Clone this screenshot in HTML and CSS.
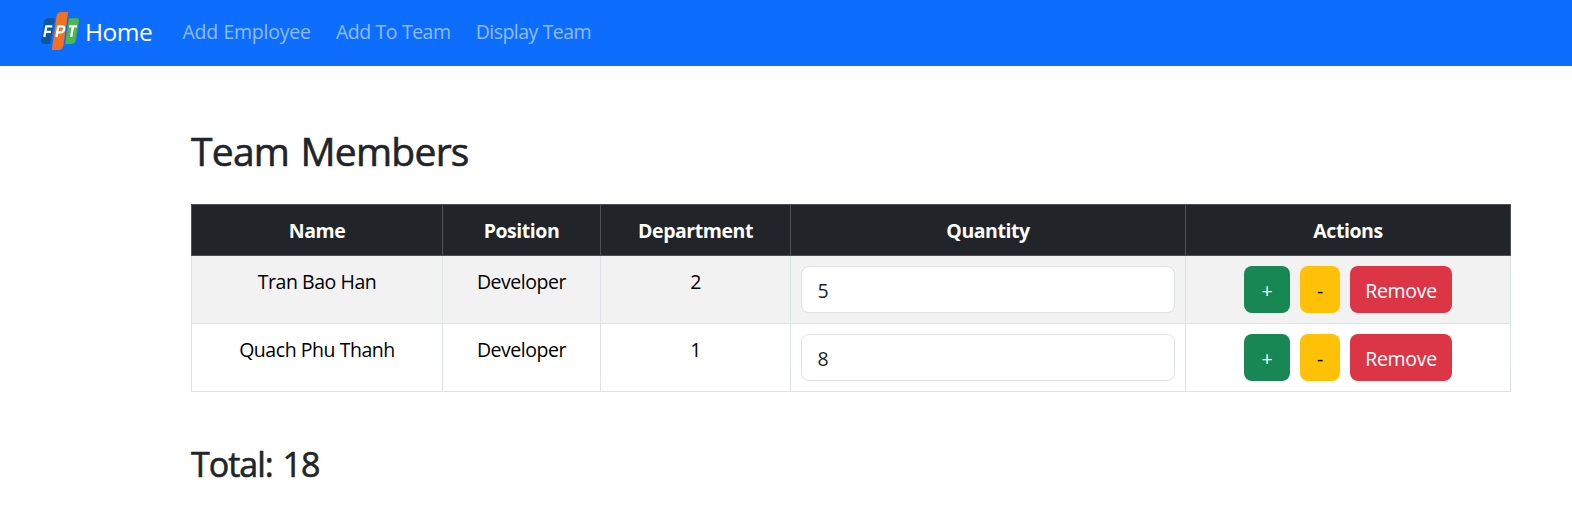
FILE: index.html
```html
<!DOCTYPE html>
<html lang="en">
<head>
<meta charset="utf-8">
<title>Team Members</title>
<link rel="stylesheet" href="styles.css">
</head>
<body>
<nav class="navbar">
  <a class="brand" href="#">
    <svg class="logo" width="38" height="40" viewBox="0 0 38 40" aria-hidden="true">
      <path fill="#0b57a4" d="M7 6.300H16L10 32H2.500Q-.3 32 .1 28.500L3 10Q3.600 6.300 7 6.300Z"/>
      <path fill="#4db848" d="M27 6.300H36Q38.300 6.300 37.900 9.500L34.800 28Q34 32 30.500 32H22Z"/>
      <path fill="#0d6efd" d="M14 6H17L12 33H9ZM26 6H28L24 33H21Z"/>
      <path fill="#f37021" d="M20 0H27.200L22.300 33.500Q21.500 38 17.500 38H10.800L15.500 4.500Q16.300 0 20 0Z"/>
      <g fill="none" stroke="#fff" stroke-width="2.300">
        <path d="M3.300 25L5.300 14.300H11.300M4.400 19.800H10"/>
        <path d="M15.400 25L17.300 14.300H21.300Q23.600 14.300 23.100 17.200Q22.700 20.300 20 20.300H16.500"/>
        <path d="M28 14.300H36M32 14.300L30.200 25"/>
      </g>
    </svg>
    <span class="brand-text">Home</span>
  </a>
  <div class="links">
    <a class="link add" href="#">Add Employee</a>
    <a class="link" href="#">Add To Team</a>
    <a class="link" href="#">Display Team</a>
  </div>
</nav>
<main class="container">
  <h1 class="title">Team Members</h1>
  <table class="table">
    <colgroup><col class="c-name"><col class="c-position"><col class="c-department"><col class="c-quantity"><col class="c-actions"></colgroup>
    <thead>
      <tr><th>Name</th><th>Position</th><th>Department</th><th>Quantity</th><th>Actions</th></tr>
    </thead>
    <tbody>
      <tr>
        <td>Tran Bao Han</td><td>Developer</td><td>2</td>
        <td><input class="field" type="text" value="5"></td>
        <td><div class="actions"><button class="btn plus">+</button><button class="btn minus">-</button><button class="btn remove">Remove</button></div></td>
      </tr>
      <tr>
        <td>Quach Phu Thanh</td><td>Developer</td><td>1</td>
        <td><input class="field" type="text" value="8"></td>
        <td><div class="actions"><button class="btn plus">+</button><button class="btn minus">-</button><button class="btn remove">Remove</button></div></td>
      </tr>
    </tbody>
  </table>
  <h2 class="total">Total: 18</h2>
</main>
</body>
</html>
```
FILE: styles.css
```css
* { box-sizing: border-box; }
body {
  margin: 0;
  background: #fff;
  color: #212529;
  font: 19.500px/30px "Open Sans", "Noto Sans", sans-serif;
}
.navbar {
  display: flex;
  align-items: center;
  height: 66px;
  padding: 0 41px 2px;
  background: #0d6efd;
}
.brand, .link { text-decoration: none; }
.brand { display: flex; align-items: center; gap: 6px; width: 141.500px; color: #fff; font-size: 24.500px; letter-spacing: -.5px; }
.logo { display: block; flex: none; margin-top: -1px; }
.links { display: flex; gap: 25.300px; }
.link { color: rgba(255, 255, 255, .55); white-space: nowrap; letter-spacing: -.55px; word-spacing: .5px; }
.link.add { letter-spacing: -.22px; }
.container { width: 1320px; margin: 0 0 0 191px; padding-top: 61px; }
.title { margin: 0; font-size: 39px; font-weight: 500; line-height: 48px; letter-spacing: -.75px; word-spacing: 2px; -webkit-text-stroke: .6px #212529; }
.table {
  width: 1319px;
  margin: 29px 0 0;
  table-layout: fixed;
  border-collapse: collapse;
  text-align: center;
  color: #000;
  letter-spacing: -.45px;
}
.c-name { width: 251px; }
.c-position { width: 158px; }
.c-department { width: 190px; }
.c-quantity { width: 395px; }
.c-actions { width: 325px; }
.table th, .table td { padding: 10px; border: 1px solid #dee2e6; vertical-align: top; }
.table th { height: 51px; padding: 11px 10px 9px; background: #212529; border-color: #4d5154; color: #fff; font-weight: 700; }
.table td { height: 68px; padding-top: 11px; }
.table td:nth-child(n+4) { padding-top: 10px; }
.table tbody tr:nth-child(odd) td { background: #f2f2f2; }
.field {
  display: block;
  width: 100%;
  height: 47px;
  padding: 2px 15.500px 0;
  border: 1px solid #dee2e6;
  border-radius: 8px;
  background: #fff;
  color: #212529;
  font: inherit;
}
.actions { display: flex; justify-content: center; gap: 10px; }
.btn { height: 47px; padding: 3px 0 0; border: 0; border-radius: 8px; color: #fff; font: inherit; letter-spacing: -.3px; }
.plus { width: 46px; background: #198754; }
.minus { width: 40px; background: #ffc107; color: #000; }
.remove { width: 102px; background: #dc3545; }
.total { margin: 51px 0 0; font-size: 34px; font-weight: 500; line-height: 42px; letter-spacing: -1px; word-spacing: 2px; -webkit-text-stroke: .6px #212529; }
```
